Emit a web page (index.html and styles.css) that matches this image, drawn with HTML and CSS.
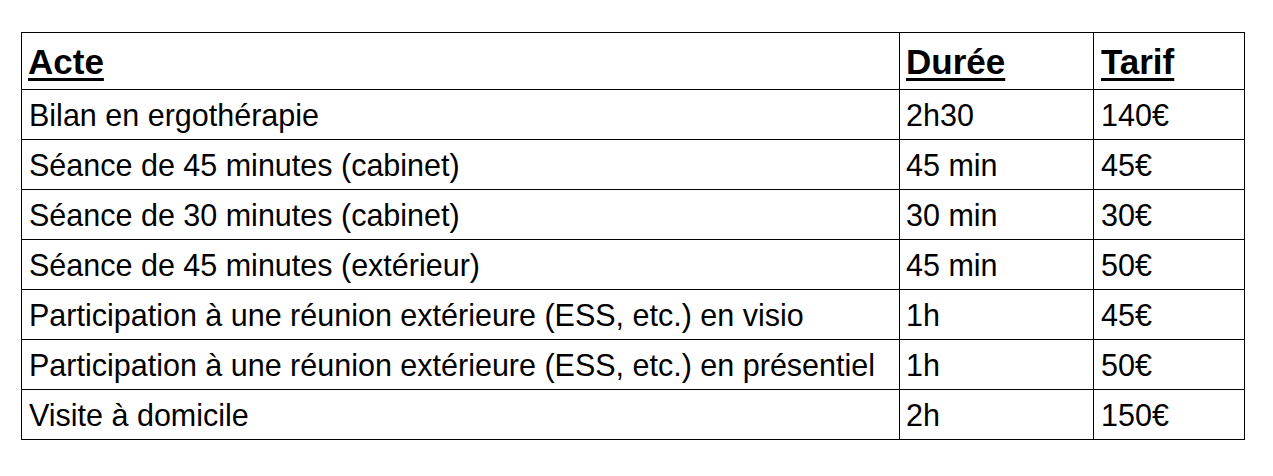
FILE: index.html
```html
<!DOCTYPE html>
<html lang="fr">
<head>
<meta charset="utf-8">
<title>Tarifs</title>
<link rel="stylesheet" href="styles.css">
</head>
<body>
<div class="page">
  <table class="tarifs">
    <colgroup>
      <col class="c-acte">
      <col class="c-duree">
      <col class="c-tarif">
    </colgroup>
    <thead>
      <tr>
        <th>Acte</th>
        <th>Durée</th>
        <th>Tarif</th>
      </tr>
    </thead>
    <tbody>
      <tr><td>Bilan en ergothérapie</td><td>2h30</td><td>140€</td></tr>
      <tr><td>Séance de 45 minutes (cabinet)</td><td>45 min</td><td>45€</td></tr>
      <tr><td>Séance de 30 minutes (cabinet)</td><td>30 min</td><td>30€</td></tr>
      <tr><td>Séance de 45 minutes (extérieur)</td><td>45 min</td><td>50€</td></tr>
      <tr><td>Participation à une réunion extérieure (ESS, etc.) en visio</td><td>1h</td><td>45€</td></tr>
      <tr><td>Participation à une réunion extérieure (ESS, etc.) en présentiel</td><td>1h</td><td>50€</td></tr>
      <tr><td>Visite à domicile</td><td>2h</td><td>150€</td></tr>
    </tbody>
  </table>
</div>
</body>
</html>
```

FILE: styles.css
```css
* { box-sizing: border-box; }

html, body {
  margin: 0;
  background: #ffffff;
}

.page {
  padding: 32px 0 0 21px;
  font-family: "Liberation Sans", Arial, sans-serif;
  color: #000000;
}

.tarifs {
  table-layout: fixed;
  width: 1224px;
  border-collapse: separate;
  border-spacing: 0;
  border-left: 1px solid #000;
  border-top: 1px solid #000;
}

.c-acte { width: 878px; }
.c-duree { width: 194px; }
.c-tarif { width: 151px; }

.tarifs th,
.tarifs td {
  border-right: 1px solid #000;
  border-bottom: 1px solid #000;
  text-align: left;
  vertical-align: top;
  white-space: nowrap;
}

.tarifs th {
  font-size: 35px;
  font-weight: bold;
  text-decoration: underline;
  text-decoration-thickness: 3px;
  text-underline-offset: 4px;
  line-height: 40px;
  padding: 9px 6px 7px 6px;
  height: 57px;
}

.tarifs td {
  font-size: 30.5px;
  line-height: 34px;
  padding: 8px 6px 7px 6px;
  height: 50px;
}

.tarifs td:first-child {
  padding-left: 7px;
}

.tarifs td:nth-child(3),
.tarifs th:nth-child(3) {
  padding-left: 7px;
}
```
